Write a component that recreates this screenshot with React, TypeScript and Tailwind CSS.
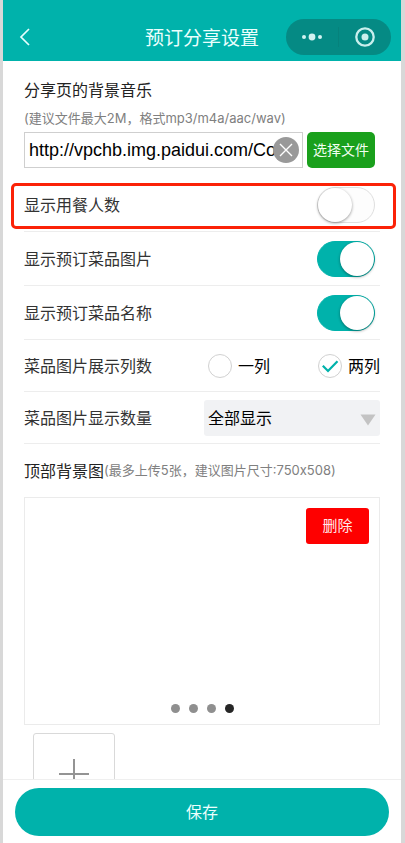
import React, { useState } from 'react';

interface SwitchRowProps {
  id: string;
  label: string;
  checked: boolean;
  onChange: (value: boolean) => void;
  highlighted?: boolean;
}

function SwitchRow({ id, label, checked, onChange, highlighted }: SwitchRowProps) {
  return (
    <div className="relative flex h-[54px] items-center justify-between border-b border-[#ededed] pr-[5px]">
      {highlighted && (
        <div className="pointer-events-none absolute top-[5px] bottom-[2px] -left-[13px] -right-4 rounded-[5px] border-[3px] border-[#fb2207]" />
      )}
      <label htmlFor={id} className="text-base text-[#333]">
        {label}
      </label>
      <span className="relative flex">
        <input
          id={id}
          type="checkbox"
          role="switch"
          checked={checked}
          onChange={(e) => onChange(e.target.checked)}
          className="peer h-9 w-[58px] appearance-none rounded-full border border-[#dfdfdf] bg-[#fdfdfd] checked:border-[#00b2ab] checked:bg-[#00b2ab]"
        />
        <span className="pointer-events-none absolute top-px left-px size-[34px] rounded-full bg-white shadow-[0_1px_3px_rgba(0,0,0,0.4)] peer-checked:left-[23px]" />
      </span>
    </div>
  );
}

interface RadioOptionProps {
  label: string;
  value: string;
  current: string;
  onSelect: (value: string) => void;
}

function RadioOption({ label, value, current, onSelect }: RadioOptionProps) {
  return (
    <label className="flex items-center gap-1.5 text-base text-black">
      <span className="relative flex">
        <input
          type="radio"
          name="columns"
          value={value}
          checked={current === value}
          onChange={() => onSelect(value)}
          className="size-6 appearance-none rounded-full border border-[#d1d1d1] bg-white"
        />
        {current === value && (
          <svg className="pointer-events-none absolute inset-0 size-6" viewBox="0 0 24 24" fill="none" stroke="#00b2ab" strokeWidth={2.2}>
            <path d="M4.8 11.8L10 17L19.5 7.2" />
          </svg>
        )}
      </span>
      {label}
    </label>
  );
}

export default function App() {
  const [musicUrl, setMusicUrl] = useState('http://vpchb.img.paidui.com/Common/music.mp3');
  const [showGuests, setShowGuests] = useState(false);
  const [showImages, setShowImages] = useState(true);
  const [showNames, setShowNames] = useState(true);
  const [columns, setColumns] = useState('2');
  const [amount, setAmount] = useState('all');
  const [slide, setSlide] = useState(3);

  return (
    <div className="flex h-screen flex-col border-r-4 border-l-[3px] border-[#d8d8d8] bg-white font-['Inter','Noto_Sans_CJK_SC',sans-serif]">
      {/* Header */}
      <header className="grid shrink-0 grid-cols-[1fr_auto_1fr] items-center bg-[#00b2ab] px-2.5 pt-[19px] pb-1.5">
        <button type="button" aria-label="返回" className="ml-1 flex size-6 items-center">
          <svg className="h-[18px] w-4" viewBox="0 0 16 18" fill="none" stroke="#e6fffd" strokeWidth={1.7}>
            <path d="M12 1L4 9L12 17" />
          </svg>
        </button>
        <h1 className="pt-1 text-[19px] leading-7 text-[#eafffd]">预订分享设置</h1>
        <div className="flex h-9 w-[105px] items-center justify-self-end rounded-full bg-[#058a84]">
          <button type="button" aria-label="更多" className="flex h-full flex-1 items-center justify-center">
            <svg className="h-3 w-6" viewBox="0 0 24 12" fill="#d2f3f1">
              <circle cx="4" cy="6" r="2" />
              <circle cx="12" cy="6" r="3.4" />
              <circle cx="20" cy="6" r="2" />
            </svg>
          </button>
          <span className="h-5 w-px bg-[#06827c]" />
          <button type="button" aria-label="关闭" className="flex h-full flex-1 items-center justify-center">
            <svg className="size-5" viewBox="0 0 20 20" fill="none">
              <circle cx="10" cy="10" r="8.7" stroke="#c9efed" strokeWidth={2.3} />
              <circle cx="10" cy="10" r="3.5" fill="#c9efed" />
            </svg>
          </button>
        </div>
      </header>

      <main className="min-h-0 flex-1 overflow-y-auto px-[21px] [scrollbar-width:none]">
        {/* Background music */}
        <section className="pt-[17px] pb-2.5">
          <label htmlFor="music" className="block text-base text-[#222]">
            分享页的背景音乐
          </label>
          <p className="mt-1.5 text-[13px] leading-5 text-[#808080]">(建议文件最大2M，格式mp3/m4a/aac/wav)</p>
          <div className="mt-1 flex items-center gap-1 pr-[5px]">
            <div className="relative min-w-0 flex-1">
              <input
                id="music"
                type="text"
                value={musicUrl}
                onChange={(e) => setMusicUrl(e.target.value)}
                className="block h-9 w-full border border-[#cfcfcf] pr-[26px] pl-1 font-['Liberation_Sans','Noto_Sans_CJK_SC',sans-serif] text-lg text-black outline-none"
              />
              <button
                type="button"
                aria-label="清空"
                onClick={() => setMusicUrl('')}
                className="absolute top-[5px] right-1 flex size-[26px] items-center justify-center rounded-full bg-[#999]"
              >
                <svg className="size-3.5" viewBox="0 0 14 14" stroke="#fff" strokeWidth={1.4}>
                  <path d="M1 1L13 13M13 1L1 13" />
                </svg>
              </button>
            </div>
            <button type="button" className="h-9 w-[68px] rounded-[5px] bg-[#1aa01c] text-sm text-[#f1fff1]">
              选择文件
            </button>
          </div>
        </section>

        {/* Display switches */}
        <SwitchRow id="guests" label="显示用餐人数" checked={showGuests} onChange={setShowGuests} highlighted />
        <SwitchRow id="images" label="显示预订菜品图片" checked={showImages} onChange={setShowImages} />
        <SwitchRow id="names" label="显示预订菜品名称" checked={showNames} onChange={setShowNames} />

        <div className="flex h-[52px] items-center justify-between border-b border-[#ededed]">
          <span className="text-base text-[#333]">菜品图片展示列数</span>
          <div className="flex gap-12">
            <RadioOption label="一列" value="1" current={columns} onSelect={setColumns} />
            <RadioOption label="两列" value="2" current={columns} onSelect={setColumns} />
          </div>
        </div>

        <div className="flex h-[52px] items-center justify-between border-b border-[#ededed]">
          <label htmlFor="amount" className="text-base text-[#333]">
            菜品图片显示数量
          </label>
          <div className="relative w-44">
            <select
              id="amount"
              value={amount}
              onChange={(e) => setAmount(e.target.value)}
              className="block h-9 w-full appearance-none rounded-[3px] bg-[#f1f2f4] pl-1 text-base text-black"
            >
              <option value="all">全部显示</option>
            </select>
            <svg className="pointer-events-none absolute top-3.5 right-1 h-3 w-4" viewBox="0 0 16 12" fill="#c3c3c3">
              <path d="M0.5 0.5H15.5L8 11.5Z" />
            </svg>
          </div>
        </div>

        {/* Top background images */}
        <section>
          <h2 className="flex h-[53px] items-center text-base text-[#222]">
            顶部背景图
            <span className="text-[13px] text-[#808080]">(最多上传5张，建议图片尺寸:750x508)</span>
          </h2>
          <div className="flex h-[228px] flex-col items-center justify-between border border-[#ebebeb] px-2.5 pt-2.5 pb-[11px]">
            <button type="button" className="h-9 w-[63px] self-end rounded-[3px] bg-[#fe0000] text-[15px] text-[#ffeaea]">
              删除
            </button>
            <div className="flex gap-[9px]">
              {[0, 1, 2, 3].map((i) => (
                <button
                  key={i}
                  type="button"
                  aria-label={`第${i + 1}张`}
                  onClick={() => setSlide(i)}
                  className={`size-[9px] rounded-full ${slide === i ? 'bg-[#262626]' : 'bg-[#8f8f8f]'}`}
                />
              ))}
            </div>
          </div>
          <button
            type="button"
            aria-label="上传图片"
            className="mt-2 mb-4 ml-[9px] flex size-[82px] items-center justify-center rounded-[3px] border border-[#d9d9d9]"
          >
            <svg className="size-8" viewBox="0 0 32 32" stroke="#949494" strokeWidth={2}>
              <path d="M1 16H31M16 1V31" />
            </svg>
          </button>
        </section>
      </main>

      {/* Save bar */}
      <footer className="shrink-0 border-t border-[#efefef] bg-white px-3 pt-2 pb-[7px]">
        <button type="button" className="block h-12 w-full rounded-full bg-[#00b2ab] text-base text-[#eafffd]">
          保存
        </button>
      </footer>
    </div>
  );
}
